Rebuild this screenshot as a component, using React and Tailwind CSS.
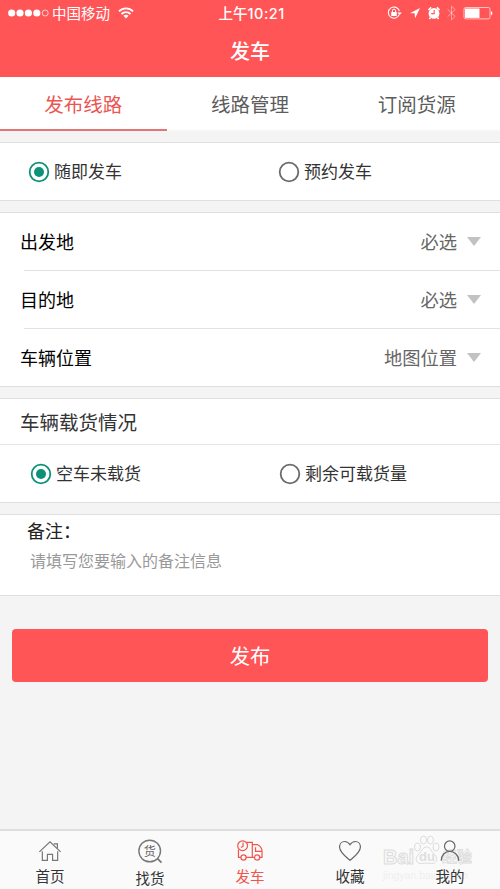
import React, { useState } from 'react';

const TABS = ['发布线路', '线路管理', '订阅货源'];

const PLACES = [
  { key: 'from', label: '出发地', value: '必选' },
  { key: 'to', label: '目的地', value: '必选' },
  { key: 'position', label: '车辆位置', value: '地图位置' },
];

function StatusBar() {
  return (
    <div className="relative flex h-[25px] items-center justify-between pl-2 pr-[7px] text-white">
      <div className="flex items-center">
        <svg width="41" height="10" viewBox="0 0 41 10" fill="currentColor">
          <circle cx="3.7" cy="5" r="3.6" />
          <circle cx="12" cy="5" r="3.6" />
          <circle cx="20.4" cy="5" r="3.6" />
          <circle cx="28.8" cy="5" r="3.6" />
          <circle cx="37.2" cy="5" r="3" fill="none" stroke="currentColor" strokeWidth="0.7" />
        </svg>
        <span className="ml-[3px] text-[14.5px] leading-[25px]">中国移动</span>
        <svg className="ml-2" width="16" height="12" viewBox="0 0 16 12" fill="none" stroke="currentColor" strokeWidth="1.8">
          <path d="M1 4.4C5 .4 11 .4 15 4.4" />
          <path d="M3.5 7C6 4.6 10 4.6 12.5 7" />
          <path d="M8 11.5 5.4 8.8c1.5-1.4 3.7-1.4 5.2 0z" fill="currentColor" stroke="none" />
        </svg>
      </div>
      <span className="absolute left-[218.5px] text-[14.5px] font-medium leading-[25px]">
        上午<span className="font-['Inter'] text-[14.5px] tracking-[0.5px]">10:21</span>
      </span>
      <svg width="106" height="16" viewBox="0 0 106 16" fill="none" stroke="currentColor">
        {/* rotation lock */}
        <path d="M12.2 9.6A5.6 5.6 0 1 1 12.4 6.2" strokeWidth="1.1" />
        <path d="M10.4 7.4h4.4l-2.2 2.7z" fill="currentColor" stroke="none" />
        <rect x="4.2" y="7" width="5.6" height="4" rx=".5" fill="currentColor" stroke="none" />
        <path d="M5.4 7V5.8a1.6 1.6 0 0 1 3.2 0V7" />
        {/* location */}
        <path d="M33 3 22.8 8.2h4.8l.5 5z" fill="currentColor" stroke="none" />
        {/* alarm */}
        <circle cx="47" cy="8.4" r="5.4" fill="currentColor" stroke="none" />
        <path d="m41.4 5 2.8-2.6M52.6 5l-2.8-2.6M43.6 12.6l-1.2 1.4M50.4 12.6l1.2 1.4" strokeWidth="1.6" />
        <path d="M47.2 5v3.6h-3" stroke="#ff5556" strokeWidth="1.1" />
        {/* bluetooth */}
        <path d="m60.6 4.4 7.6 7-3.7 3.4V1.2l3.7 3.4-7.6 7" strokeWidth=".9" opacity=".5" />
        {/* battery */}
        <rect x="77" y="2.5" width="26" height="11.4" rx="1.6" strokeWidth=".8" opacity=".8" />
        <path d="M78 3.5h14.5v9.4H78z" fill="currentColor" stroke="none" />
        <path d="M104 6.2c1.8.5 1.8 3.5 0 4z" fill="currentColor" stroke="none" />
      </svg>
    </div>
  );
}

function Radio({ checked, onClick, className, children }) {
  return (
    <button type="button" onClick={onClick} className={`flex items-center ${className || ''}`}>
      <svg width="22" height="22" viewBox="0 0 22 22">
        <circle cx="11" cy="11" r="9.3" fill="none" stroke={checked ? '#0c9278' : '#6b6b6b'} strokeWidth="1.8" />
        {checked && <circle cx="11" cy="11" r="5" fill="#0c9278" />}
      </svg>
      <span className="mb-0.5 ml-1 text-[17px] leading-6 text-[#333]">{children}</span>
    </button>
  );
}

function HomeIcon() {
  return (
    <svg width="26" height="26" viewBox="0 0 26 26" fill="none" stroke="#777" strokeWidth="1.3">
      <path d="M1.5 14 13 3l11.5 11" />
      <path d="M17 5.2h4v5" />
      <path d="M4.7 13.2v10h5.5v-6.600h5.600v6.600h5.500v-10" />
    </svg>
  );
}

function FindIcon() {
  return (
    <span className="relative block h-[26px] w-[26px]">
      <svg width="26" height="26" viewBox="0 0 26 26" fill="none" stroke="#777" strokeWidth="1.4">
        <circle cx="12.7" cy="12" r="10.8" />
        <path d="m20.5 19.7 4 4" strokeWidth="1.8" />
      </svg>
      <span className="absolute left-[6.700px] top-0 text-[12px] leading-[23px] text-[#666]">货</span>
    </span>
  );
}

function TruckIcon() {
  return (
    <svg width="28" height="26" viewBox="0 0 28 26" fill="none" stroke="#f0544c" strokeWidth="1.3">
      <circle cx="6" cy="7.3" r="5.3" />
      <path d="M6.500 3.800v4l-2.200 1.500" />
      <path d="M10.500 3.700h6v16.300h-6.700M1.500 11.500V20h2.700" />
      <path d="M16.500 6.200h5.700c2.500 1.200 4.800 4 4.800 7V20h-2.500M16.500 20h2.400" />
      <path d="M20 9v4.500h6.800" />
      <circle cx="7" cy="20" r="2.800" />
      <circle cx="21.700" cy="20" r="2.800" />
    </svg>
  );
}

function HeartIcon() {
  return (
    <svg width="26" height="26" viewBox="0 0 26 26" fill="none" stroke="#666" strokeWidth="1.3">
      <path d="M13 23.2C10 20.5 1.7 14.7 1.7 8.7 1.7 5.300 4 2.700 7.200 2.700c2.800 0 4.600 1.600 5.800 3.600 1.200-2 3-3.600 5.800-3.600 3.200 0 5.500 2.600 5.500 6 0 6-8.300 11.800-11.300 14.500z" />
    </svg>
  );
}

function UserIcon() {
  return (
    <svg width="26" height="26" viewBox="0 0 26 26" fill="none" stroke="#666" strokeWidth="1.3">
      <circle cx="12.7" cy="7.8" r="5.7" />
      <path d="M3.500 23.500c0-6 4-10 9.200-10s9.800 4 9.800 10" />
    </svg>
  );
}

const NAV = [
  { label: '首页', icon: HomeIcon },
  { label: '找货', icon: FindIcon },
  { label: '发车', icon: TruckIcon, active: true },
  { label: '收藏', icon: HeartIcon },
  { label: '我的', icon: UserIcon },
];

function Watermark() {
  return (
    <div className="pointer-events-none absolute left-[383px] top-1 h-[54px] w-[96px] font-['Liberation_Sans','Noto_Sans_CJK_SC',sans-serif] text-[#dedede]">
      <svg className="absolute left-[30px] top-0" width="27" height="30" viewBox="0 0 27 30" fill="#fafafa" stroke="#dcdcdc">
        <ellipse cx="4.500" cy="12" rx="3" ry="4" />
        <ellipse cx="10.500" cy="5" rx="3" ry="4" />
        <ellipse cx="17.500" cy="5" rx="3" ry="4" />
        <ellipse cx="23" cy="12" rx="3" ry="4" />
        <path d="M13.500 12c-4 0-5 5-8.500 8-4 4-1 9 3.500 8.500 3-.5 7-.5 10 0 4.500.5 7-4.500 3.500-8.500-3.500-3-4.500-8-8.500-8z" />
      </svg>
      <span className="absolute left-0 top-3 text-[20px] font-bold leading-5 text-[#fafafa] [-webkit-text-stroke:1px_#dcdcdc]">Bai</span>
      <span className="absolute left-[36px] top-[14px] text-[13px] font-bold leading-4">du</span>
      <span className="absolute left-[59px] top-3 text-[15px] font-bold leading-5 text-[#fafafa] [-webkit-text-stroke:0.8px_#dcdcdc]">经验</span>
      <span className="absolute left-0 top-[34px] text-[10.5px] leading-3 text-[#efefef]">jingyan.baidu.com</span>
    </div>
  );
}

export default function App() {
  const [tab, setTab] = useState(0);
  const [departure, setDeparture] = useState('now');
  const [load, setLoad] = useState('empty');

  return (
    <div className="flex h-[889px] w-[500px] flex-col overflow-hidden bg-[#f4f4f4] font-['Noto_Sans_CJK_SC',sans-serif]">
      <header className="h-[77px] bg-[#ff5556]">
        <StatusBar />
        <h1 className="text-center text-[20px] font-medium leading-[51px] text-white">发车</h1>
      </header>

      <nav className="flex h-[54px] bg-white">
        {TABS.map((name, i) => (
          <button
            key={name}
            type="button"
            onClick={() => setTab(i)}
            className={`flex-1 border-b-2 pt-px text-[19.5px] leading-[51px] ${i === tab ? 'border-[#e27575] text-[#ea5654]' : 'border-[#fafafa] text-[#5c5c5c]'}`}
          >
            {name}
          </button>
        ))}
      </nav>

      <section className="mt-[11px] flex h-[59px] items-center border-y border-[#dfdfdf] bg-white">
        <Radio className="ml-7 w-[250px]" checked={departure === 'now'} onClick={() => setDeparture('now')}>随即发车</Radio>
        <Radio checked={departure === 'later'} onClick={() => setDeparture('later')}>预约发车</Radio>
      </section>

      <section className="mt-[11px] border-y border-[#dfdfdf] bg-white">
        {PLACES.map((p, i) => (
          <div key={p.key}>
            {i > 0 && <div className="ml-6 h-px bg-[#e2e2e2]" />}
            <div className="flex h-[57px] items-center pl-5 pr-[19px]">
              <span className="text-[18px] text-black">{p.label}</span>
              <span className="ml-auto text-[18.3px] text-[#666]">{p.value}</span>
              <svg className="ml-[10px]" width="14" height="9" viewBox="0 0 14 9">
                <path d="M0 0h14L7 9z" fill="#c2c2c2" />
              </svg>
            </div>
          </div>
        ))}
      </section>

      <section className="mt-[11px] border-y border-[#dfdfdf] bg-white">
        <h2 className="h-[46px] border-b border-[#e6e6e6] pl-5 text-[19.500px] leading-[46px] text-[#333]">车辆载货情况</h2>
        <div className="flex h-[57px] items-center">
          <Radio className="ml-[30px] w-[249px]" checked={load === 'empty'} onClick={() => setLoad('empty')}>空车未载货</Radio>
          <Radio checked={load === 'rest'} onClick={() => setLoad('rest')}>剩余可载货量</Radio>
        </div>
      </section>

      <section className="mt-[11px] h-[82px] border-y border-[#dfdfdf] bg-white">
        <div className="pl-[27px] text-[18px] leading-[30px] text-[#222]">备注：</div>
        <div className="pl-[30px] text-[16px] leading-[30px] text-[#999]">请填写您要输入的备注信息</div>
      </section>

      <button type="button" className="mx-3 mt-[33px] h-[53px] shrink-0 rounded-[4px] bg-[#ff5556] text-[20.3px] text-white">发布</button>

      <footer className="relative mt-auto flex h-[60px] shrink-0 border-t-2 border-[#dedede] bg-[#fafafa]">
        <Watermark />
        {NAV.map(({ label, icon: Icon, active }) => (
          <div key={label} className="relative flex flex-1 flex-col items-center pt-2">
            <Icon />
            <span className={`text-[14.5px] leading-[26px] ${active ? 'text-[#f0544c]' : 'text-[#333]'}`}>{label}</span>
          </div>
        ))}
      </footer>
    </div>
  );
}
